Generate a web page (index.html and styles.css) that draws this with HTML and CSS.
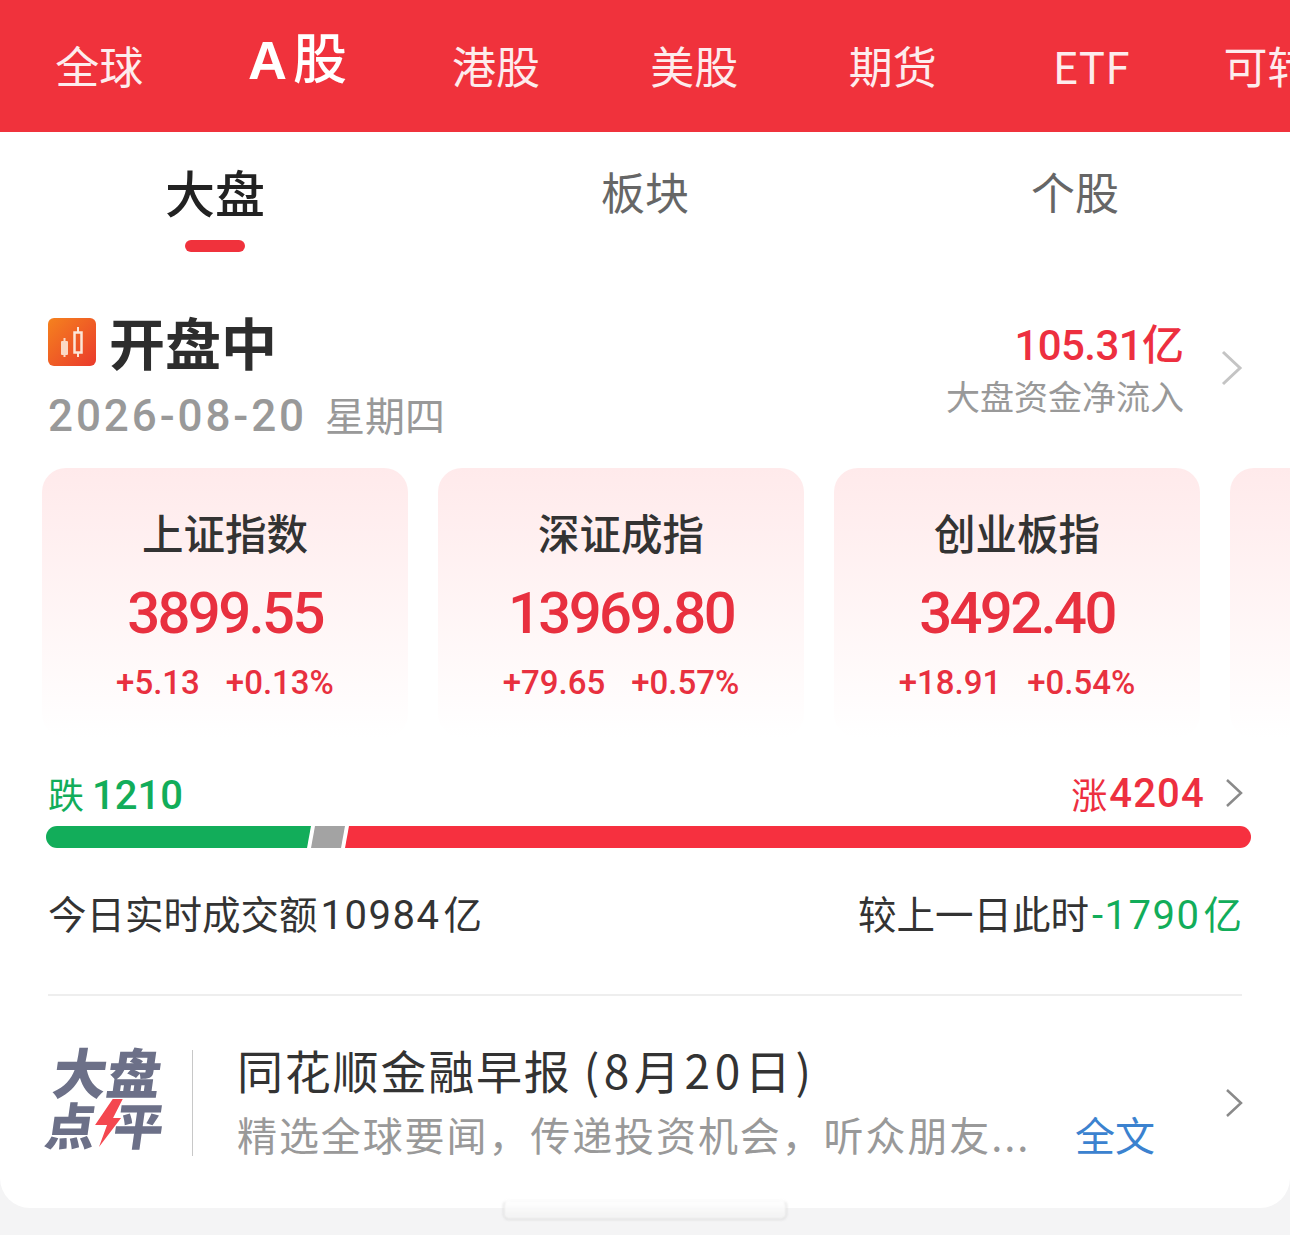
FILE: index.html
```html
<!DOCTYPE html>
<html lang="zh-CN">

<head>
    <meta charset="UTF-8">
    <meta name="viewport" content="width=device-width, initial-scale=1.0">
    <title>A股</title>
    <link rel="stylesheet" href="styles.css">
</head>

<body>
    <div class="market-nav">
        <div class="market-item">全球</div>
        <div class="market-item active"><b>A</b>股</div>
        <div class="market-item">港股</div>
        <div class="market-item">美股</div>
        <div class="market-item">期货</div>
        <div class="market-item">ETF</div>
        <div class="market-item">可转债</div>
    </div>

    <div class="panel">
        <div class="tabs">
            <div class="tab active">大盘</div>
            <div class="tab">板块</div>
            <div class="tab">个股</div>
        </div>

        <div class="status">
            <div class="status-left">
                <div class="status-title">
                    <svg class="status-icon" width="48" height="48" viewBox="0 0 48 48">
                        <defs>
                            <linearGradient id="ico" x1="0" y1="0" x2="1" y2="1">
                                <stop offset="0" stop-color="#f5821e" />
                                <stop offset="1" stop-color="#ea3a2c" />
                            </linearGradient>
                        </defs>
                        <rect width="48" height="48" rx="6" fill="url(#ico)" />
                        <path d="M16.500 20v4M16.500 36v3" stroke="#fbd9c4" stroke-width="2" />
                        <rect x="13" y="23" width="7" height="14" rx="1" fill="#fbd9c4" />
                        <path d="M30 9v5M30 34v5" stroke="#fbe6d8" stroke-width="2" />
                        <rect x="26.500" y="14.500" width="7" height="20" fill="none" stroke="#fbe6d8" stroke-width="2.500" />
                    </svg>
                    <span>开盘中</span>
                </div>
                <div class="status-date"><span class="num">2026-08-20</span><span class="week">星期四</span></div>
            </div>
            <div class="status-right">
                <div class="flow">
                    <div class="flow-value"><span class="num">105.31</span>亿</div>
                    <div class="flow-label">大盘资金净流入</div>
                </div>
                <svg class="chevron" width="24" height="40" viewBox="0 0 24 40">
                    <path d="M3 4l17 16L3 36" fill="none" stroke="#c4c4c4" stroke-width="3" />
                </svg>
            </div>
        </div>

        <div class="cards">
            <div class="card">
                <div class="card-name">上证指数</div>
                <div class="card-value">3899.55</div>
                <div class="card-change"><span>+5.13</span><span>+0.13%</span></div>
            </div>
            <div class="card">
                <div class="card-name">深证成指</div>
                <div class="card-value">13969.80</div>
                <div class="card-change"><span>+79.65</span><span>+0.57%</span></div>
            </div>
            <div class="card">
                <div class="card-name">创业板指</div>
                <div class="card-value">3492.40</div>
                <div class="card-change"><span>+18.91</span><span>+0.54%</span></div>
            </div>
            <div class="card"></div>
        </div>

        <div class="breadth">
            <div class="breadth-down">跌 <span class="num">1210</span></div>
            <div class="breadth-up">涨<span class="num">4204</span>
                <svg class="chevron-small" width="20" height="32" viewBox="0 0 20 32">
                    <path d="M3 3l14 13L3 29" fill="none" stroke="#8a8a8a" stroke-width="2.500" />
                </svg>
            </div>
        </div>
        <div class="bar">
            <div class="bar-down"></div>
            <div class="bar-flat"></div>
            <div class="bar-up"></div>
        </div>

        <div class="turnover">
            <div>今日实时成交额<span class="num">10984</span>亿</div>
            <div>较上一日此时<span class="green"><span class="num">-1790</span>亿</span></div>
        </div>

        <div class="news">
            <div class="logo">
                <div class="logo-line">大盘</div>
                <div class="logo-line">点<svg class="bolt" width="26" height="48" viewBox="0 0 26 48">
                        <path d="M15 0h10l-7 19h8L8 48l5-22H1z" fill="#f4474f" />
                    </svg>平</div>
            </div>
            <div class="news-divider"></div>
            <div class="news-body">
                <div class="news-title">同花顺金融早报 <span class="news-date">(8月20日)</span></div>
                <div class="news-desc">
                    <span class="news-text">精选全球要闻，传递投资机会，听众朋友...</span>
                    <span class="news-more">全文</span>
                </div>
            </div>
            <svg class="chevron-small" width="20" height="32" viewBox="0 0 20 32">
                <path d="M3 3l14 13L3 29" fill="none" stroke="#8a8a8a" stroke-width="2.500" />
            </svg>
        </div>
    </div>

    <div class="handle"></div>
</body>

</html>
```

FILE: styles.css
```css
* {
    margin: 0;
    padding: 0;
    box-sizing: border-box;
}

body {
    position: relative;
    height: 1235px;
    overflow: hidden;
    background-color: #f4f4f5;
    font-family: "Noto Sans CJK SC", "Noto Sans", sans-serif;
    color: #333;
}

.num {
    font-family: Roboto, "Noto Sans", sans-serif;
}

/* top red bar */
.market-nav {
    display: grid;
    grid-template-columns: repeat(7, 198.4px);
    height: 132px;
    background-color: #f0323c;
    overflow: hidden;
}

.market-item {
    text-align: center;
    font-size: 44px;
    line-height: 130px;
    color: #fdeced;
    white-space: nowrap;
}

.market-item.active {
    font-size: 54px;
    font-weight: 500;
    line-height: 112px;
    color: #fff;
}

.market-item.active b {
    margin-right: 6px;
    font-family: "Liberation Sans", sans-serif;
}

/* white panel */
.panel {
    height: 1076px;
    background-color: #fff;
    border-radius: 0 0 30px 30px;
    overflow: hidden;
}

.tabs {
    display: grid;
    grid-template-columns: repeat(3, 430px);
    height: 120px;
}

.tab {
    position: relative;
    text-align: center;
    font-size: 44px;
    line-height: 118px;
    color: #666;
}

.tab.active {
    font-size: 50px;
    font-weight: 500;
    color: #222;
}

.tab.active::after {
    content: "";
    position: absolute;
    left: 185px;
    top: 108px;
    width: 60px;
    height: 12px;
    border-radius: 6px;
    background-color: #f0323c;
}

.status {
    display: flex;
    justify-content: space-between;
    height: 216px;
    padding: 57px 46px 0 48px;
}

.status-title {
    display: flex;
    align-items: center;
    gap: 13px;
    height: 62px;
    font-size: 56px;
    font-weight: 700;
    color: #2d2d2d;
}

.status-icon {
    margin-top: 4px;
}

.status-date {
    display: flex;
    align-items: baseline;
    gap: 18px;
    margin-top: 14px;
    color: #999;
}

.status-date .num {
    font-size: 44px;
    font-weight: 500;
    letter-spacing: 2.900px;
}

.week {
    font-size: 40px;
}

.status-right {
    display: flex;
    align-items: center;
    gap: 36px;
    height: 100px;
    margin-top: 7px;
}

.chevron {
    margin-top: 4px;
}

.flow {
    text-align: right;
}

.flow-value {
    font-size: 42px;
    font-weight: 500;
    line-height: 56px;
    color: #ed2f3f;
}

.flow-value .num {
    letter-spacing: -0.6px;
}

.flow-label {
    font-size: 34px;
    line-height: 44px;
    color: #999;
}

.cards {
    display: flex;
    gap: 30px;
    padding-left: 42px;
}

.card {
    flex: 0 0 366px;
    height: 270px;
    padding-top: 35px;
    border-radius: 24px;
    background: linear-gradient(#ffeaeb, #fff 100%);
    text-align: center;
}

.card-name {
    font-size: 41.500px;
    font-weight: 500;
    line-height: 58px;
    color: #333;
}

.card-value {
    margin-top: 18px;
    font-family: Roboto, sans-serif;
    font-size: 58px;
    font-weight: 500;
    line-height: 68px;
    letter-spacing: -2.600px;
    color: #e8303f;
}

.card-change {
    display: flex;
    justify-content: center;
    gap: 26px;
    margin-top: 15px;
    font-family: Roboto, sans-serif;
    font-size: 33px;
    font-weight: 500;
    line-height: 42px;
    color: #e8303f;
}

.breadth {
    display: flex;
    justify-content: space-between;
    align-items: center;
    height: 56px;
    margin-top: 27px;
    padding: 0 46px 0 48px;
    font-size: 36px;
}

.breadth .num {
    font-size: 40px;
    font-weight: 500;
}

.breadth-down {
    color: #12ad5a;
}

.breadth-up {
    display: flex;
    align-items: center;
    color: #ed2f3f;
}

.breadth-up .num {
    margin-left: 2px;
    letter-spacing: 1.200px;
}

.breadth-up .chevron-small {
    margin-left: 19px;
}

.bar {
    display: flex;
    gap: 3px;
    height: 22px;
    margin: 5px 39px 0 46px;
}

.bar-down {
    width: 265px;
    border-radius: 11px 0 0 11px;
    background-color: #12ad5a;
    clip-path: polygon(0 0, 100% 0, calc(100% - 4px) 100%, 0 100%);
}

.bar-flat {
    width: 34px;
    margin-left: -3px;
    background-color: #a3a3a3;
    clip-path: polygon(4px 0, 100% 0, calc(100% - 4px) 100%, 0 100%);
}

.bar-up {
    flex: 1;
    margin-left: -3px;
    border-radius: 0 11px 11px 0;
    background-color: #f6303f;
    clip-path: polygon(4px 0, 100% 0, 100% 100%, 0 100%);
}

.turnover {
    display: flex;
    justify-content: space-between;
    height: 148px;
    margin: 0 48px;
    padding-top: 38px;
    border-bottom: 2px solid #eee;
    font-size: 38.500px;
    line-height: 52px;
    color: #333;
}

.turnover .num {
    margin: 0 3px;
    font-size: 40px;
    letter-spacing: 1.500px;
}

.green {
    color: #12ad5a;
}

.news {
    display: flex;
    align-items: center;
    height: 214px;
    padding: 0 46px 0 48px;
}

.logo {
    width: 114px;
    margin: 0 30px 12px 0;
    padding-left: 2px;
    transform: skewX(-8deg);
    font-size: 54px;
    font-weight: 900;
    line-height: 52px;
    color: #6c7088;
    white-space: nowrap;
}

.logo-line {
    display: flex;
    align-items: center;
}

.bolt {
    flex: none;
    margin: 0 -6px 0 -2px;
}

.logo-line:last-child {
    font-size: 50px;
}

.news-divider {
    width: 1px;
    height: 106px;
    margin-right: 44px;
    background-color: #c8c8c8;
}

.news-body {
    flex: 1;
    padding-bottom: 6px;
}

.news-title {
    font-size: 46px;
    line-height: 62px;
    letter-spacing: 1.800px;
    color: #333;
    white-space: nowrap;
}

.news-date {
    letter-spacing: 4.600px;
}

.news-desc {
    display: flex;
    align-items: center;
    gap: 38px;
    margin-top: 6px;
    font-size: 40px;
    line-height: 56px;
    white-space: nowrap;
}

.news-text {
    width: 800px;
    letter-spacing: 1.900px;
    color: #999;
}

.news-more {
    color: #3b82cf;
}

.handle {
    position: absolute;
    left: 503px;
    top: 1200px;
    width: 284px;
    height: 20px;
    border: 1px solid #ccc;
    border-top-color: #f4f4f4;
    border-radius: 6px;
    background: linear-gradient(#fff, #f3f3f3);
    opacity: 0.8;
    filter: blur(1px);
}
```
